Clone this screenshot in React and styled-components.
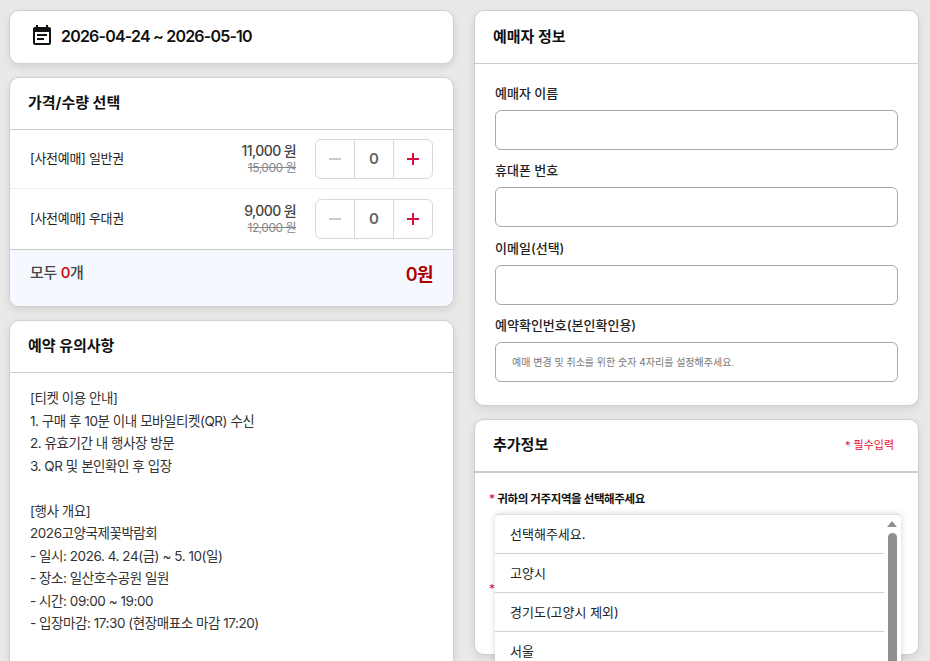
import styled, { createGlobalStyle } from 'styled-components'
import { MdEventNote } from 'react-icons/md'

const tickets = [
  { name: '[사전예매] 일반권', price: '11,000 원', list: '15,000 원' },
  { name: '[사전예매] 우대권', price: '9,000 원', list: '12,000 원' },
]

const notes = [
  '[티켓 이용 안내]',
  '1. 구매 후 10분 이내 모바일티켓(QR) 수신',
  '2. 유효기간 내 행사장 방문',
  '3. QR 및 본인확인 후 입장',
  '',
  '[행사 개요]',
  '2026고양국제꽃박람회',
  '- 일시: 2026. 4. 24(금) ~ 5. 10(일)',
  '- 장소: 일산호수공원 일원',
  '- 시간: 09:00 ~ 19:00',
  '- 입장마감: 17:30 (현장매표소 마감 17:20)',
]

const fields = [
  { label: '예매자 이름', gap: 10 },
  { label: '휴대폰 번호', gap: 11 },
  { label: '이메일(선택)', gap: 10 },
  { label: '예약확인번호(본인확인용)', gap: 0, placeholder: '예매 변경 및 취소를 위한 숫자 4자리를 설정해주세요.' },
]

const regions = ['선택해주세요.', '고양시', '경기도(고양시 제외)', '서울']

const App = () => {
  return (
    <>
      <GlobalStyle />
      <Page>
        <Column>
          <Card>
            <DateRow>
              <MdEventNote size={24} color="#111" />
              <DateText>2026-04-24 ~ 2026-05-10</DateText>
            </DateRow>
          </Card>

          <Card>
            <CardHeader>
              <CardTitle>가격/수량 선택</CardTitle>
            </CardHeader>
            {tickets.map((ticket, index) => (
              <TicketRow key={ticket.name} $last={index === tickets.length - 1}>
                <TicketName>{ticket.name}</TicketName>
                <PriceBox>
                  <Price>{ticket.price}</Price>
                  <ListPrice>{ticket.list}</ListPrice>
                </PriceBox>
                <Stepper>
                  <StepButton $muted aria-label="minus">
                    <StepBar $muted />
                  </StepButton>
                  <StepValue>0</StepValue>
                  <StepButton aria-label="plus">
                    <StepBar />
                    <StepBar $vertical />
                  </StepButton>
                </Stepper>
              </TicketRow>
            ))}
            <Summary>
              <SummaryCount>
                모두 <Red>0</Red>개
              </SummaryCount>
              <SummaryTotal>0원</SummaryTotal>
            </Summary>
          </Card>

          <Card>
            <CardHeader>
              <CardTitle>예약 유의사항</CardTitle>
            </CardHeader>
            <NoteBody>
              {notes.map((line, index) => (
                <NoteLine key={index}>{line}</NoteLine>
              ))}
            </NoteBody>
          </Card>
        </Column>

        <Column>
          <Card>
            <CardHeader $tall>
              <CardTitle>예매자 정보</CardTitle>
            </CardHeader>
            <FormBody>
              {fields.map(field => (
                <Field key={field.label} $gap={field.gap}>
                  <FieldLabel>{field.label}</FieldLabel>
                  <TextInput placeholder={field.placeholder} />
                </Field>
              ))}
            </FormBody>
          </Card>

          <Card>
            <ExtraHeader $tall>
              <CardTitle>추가정보</CardTitle>
              <Required>
                <Star>*</Star> 필수입력
              </Required>
            </ExtraHeader>
            <ExtraBody>
              <Question>
                <Star>*</Star> 귀하의 거주지역을 선택해주세요
              </Question>
              <SecondStar>*</SecondStar>
              <Dropdown>
                <OptionList>
                  {regions.map(region => (
                    <Option key={region}>{region}</Option>
                  ))}
                </OptionList>
                <ScrollTrack>
                  <ScrollArrow />
                  <ScrollThumb />
                </ScrollTrack>
              </Dropdown>
            </ExtraBody>
          </Card>
        </Column>
      </Page>
    </>
  )
}

const GlobalStyle = createGlobalStyle`
  html, body {
    margin: 0;
    height: 661px;
    overflow: hidden;
    background: #e9e9e9;
  }
  body, input {
    font-family: Inter, "Noto Sans CJK KR", sans-serif;
  }
  * {
    box-sizing: border-box;
  }
`

const Page = styled.div`
  display: grid;
  grid-template-columns: 445px 445px;
  column-gap: 20px;
  align-items: start;
  height: 661px;
  padding: 10px 0 0 9px;
  overflow: hidden;
`

const Column = styled.div`
  display: flex;
  flex-direction: column;
  gap: 13px;
`

const Card = styled.section`
  background: #fff;
  border: 1px solid #d0d0d0;
  border-radius: 10px;
  box-shadow: 0 3px 8px rgba(0, 0, 0, 0.1);
`

const DateRow = styled.div`
  display: flex;
  align-items: center;
  gap: 7px;
  height: 52px;
  padding: 0 0 2px 20px;
`

const DateText = styled.span`
  font-size: 16px;
  font-weight: 600;
  letter-spacing: -0.8px;
  color: #111;
`

const CardHeader = styled.header`
  display: flex;
  align-items: center;
  height: ${p => (p.$tall ? '53px' : '52px')};
  padding: 0 18px 4px;
  border-bottom: 1px solid #ccc;
`

const ExtraHeader = styled(CardHeader)`
  justify-content: space-between;
  padding-right: 24px;
  border-bottom-width: 2px;
`

const CardTitle = styled.h2`
  margin: 0;
  font-size: 15px;
  font-weight: 700;
  color: #111;
`

const TicketRow = styled.div`
  display: flex;
  align-items: center;
  height: ${p => (p.$last ? '61px' : '59px')};
  padding: 0 20px;
  border-bottom: 1px solid ${p => (p.$last ? '#ccc' : '#eee')};
`

const TicketName = styled.div`
  flex: 1;
  margin-bottom: 4px;
  font-size: 13px;
  letter-spacing: -0.3px;
  color: #222;
`

const PriceBox = styled.div`
  display: flex;
  flex-direction: column;
  align-items: flex-end;
  margin-right: 19px;
`

const Price = styled.div`
  font-size: 14px;
  line-height: 16px;
  font-weight: 500;
  letter-spacing: -0.6px;
  color: #444;
`

const ListPrice = styled.div`
  margin-top: 1px;
  font-size: 12px;
  line-height: 16px;
  letter-spacing: -0.5px;
  color: #888;
  text-decoration: line-through;
`

const Stepper = styled.div`
  display: grid;
  grid-template-columns: 38px 40px 1fr;
  width: 118px;
  height: 40px;
  border: 1px solid #d8d8d8;
  border-radius: 6px;
`

const StepButton = styled.button`
  position: relative;
  padding: 0;
  border: none;
  background: none;
`

const StepBar = styled.span`
  position: absolute;
  left: 50%;
  top: 50%;
  width: ${p => (p.$vertical ? '2px' : '12px')};
  height: ${p => (p.$vertical ? '12px' : '2px')};
  transform: translate(-50%, -50%);
  background: ${p => (p.$muted ? '#ccc' : '#d5103d')};
`

const StepValue = styled.div`
  display: flex;
  align-items: center;
  justify-content: center;
  padding-bottom: 1px;
  font-size: 15px;
  font-weight: 600;
  color: #666;
  border-left: 1px solid #d8d8d8;
  border-right: 1px solid #d8d8d8;
`

const Summary = styled.div`
  display: flex;
  justify-content: space-between;
  height: 56px;
  padding: 13px 20px 0;
  background: #f5f8fe;
  border-radius: 0 0 10px 10px;
`

const SummaryCount = styled.div`
  font-size: 15px;
  line-height: 20px;
  font-weight: 500;
  letter-spacing: -0.3px;
  color: #444;
`

const Red = styled.span`
  color: #c00;
`

const SummaryTotal = styled.div`
  font-size: 18px;
  line-height: 24px;
  font-weight: 600;
  letter-spacing: -0.6px;
  color: #b00000;
`

const NoteBody = styled.div`
  padding: 14px 20px 60px;
`

const NoteLine = styled.div`
  min-height: 22.5px;
  font-size: 13.5px;
  line-height: 22.5px;
  letter-spacing: -0.45px;
  color: #333;
`

const FormBody = styled.div`
  padding: 19px 20px 23px;
`

const Field = styled.label`
  display: block;
  margin-bottom: ${p => p.$gap}px;
`

const FieldLabel = styled.div`
  margin-bottom: 7px;
  font-size: 13px;
  line-height: 20px;
  font-weight: 500;
  color: #222;
`

const TextInput = styled.input`
  display: block;
  width: 403px;
  height: 40px;
  padding: 0 16px;
  border: 1px solid #a8a8a8;
  border-radius: 6px;
  font-size: 10px;
  background: #fff;
  &::placeholder {
    color: #777;
    opacity: 1;
  }
`

const Required = styled.div`
  font-size: 11px;
  color: #e8132f;
`

const Star = styled.span`
  color: #e8132f;
`

const ExtraBody = styled.div`
  position: relative;
  height: 181px;
  padding: 16px 14px 0;
`

const Question = styled.div`
  font-size: 11.5px;
  line-height: 20px;
  font-weight: 600;
  letter-spacing: -0.4px;
  color: #111;
`

const SecondStar = styled(Star)`
  position: absolute;
  left: 14px;
  top: 108px;
  font-size: 12px;
`

const Dropdown = styled.div`
  position: absolute;
  left: 20px;
  top: 41px;
  display: flex;
  width: 406px;
  height: 240px;
  background: #fff;
  border-top: 1px solid #ddd;
  box-shadow: 0 0 6px rgba(0, 0, 0, 0.16);
  border-radius: 4px 4px 0 0;
`

const OptionList = styled.ul`
  flex: 1;
  margin: 0;
  padding: 0;
  list-style: none;
`

const Option = styled.li`
  display: flex;
  align-items: center;
  height: 39px;
  padding: 0 0 2px 15px;
  border-bottom: 1px solid #d0d0d0;
  font-size: 13px;
  color: #222;
`

const ScrollTrack = styled.div`
  display: flex;
  flex-direction: column;
  align-items: center;
  width: 16px;
  margin-right: 1px;
  padding-top: 6px;
`

const ScrollArrow = styled.div`
  width: 0;
  height: 0;
  border-left: 5px solid transparent;
  border-right: 5px solid transparent;
  border-bottom: 6px solid #8f8f8f;
`

const ScrollThumb = styled.div`
  width: 9px;
  flex: 1;
  margin-top: 6px;
  background: #8f8f8f;
  border-radius: 5px 5px 0 0;
`

export default App
